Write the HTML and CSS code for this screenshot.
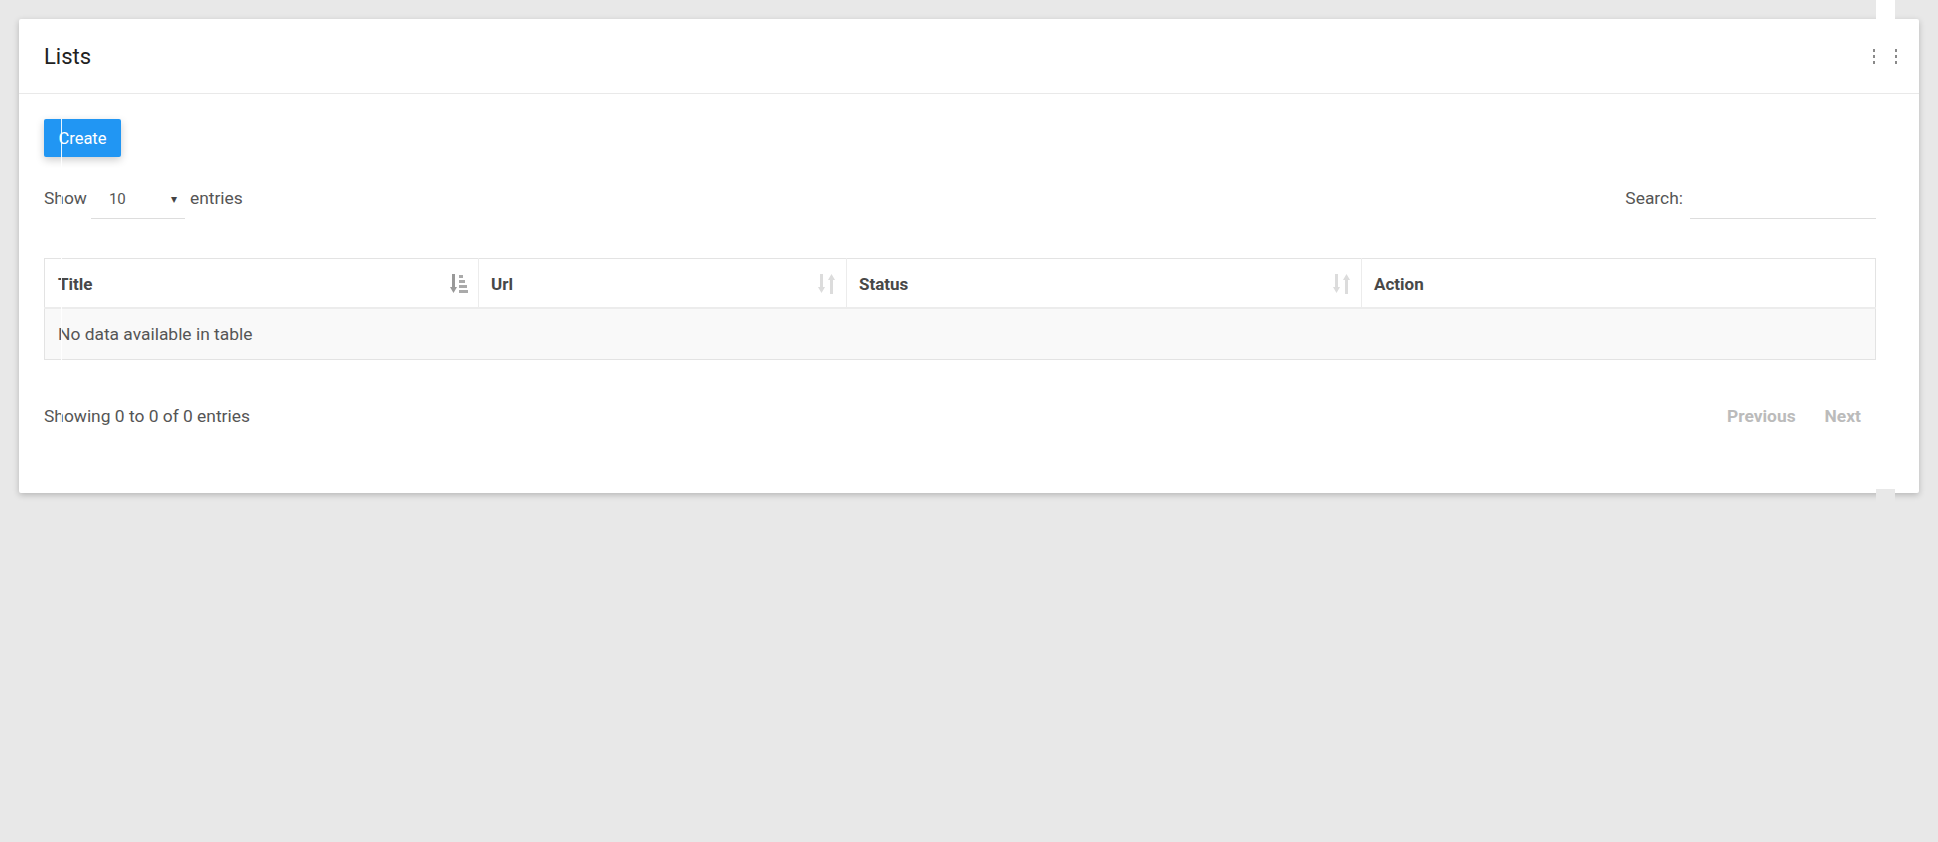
FILE: index.html
```html
<!DOCTYPE html>
<html lang="en">
<head>
  <meta charset="UTF-8">
  <meta name="viewport" content="width=device-width, initial-scale=1.0">
  <title>Lists</title>
  <link rel="stylesheet" href="styles.css">
</head>
<body>
  <div class="page">
    <div class="card">
      <div class="card-header">
        <h2>Lists</h2>
        <div class="header-tools">
          <svg class="dots" width="3" height="16" viewBox="0 0 3 16"><rect x="0" y="0" width="2" height="3"/><rect x="0" y="6" width="2" height="3"/><rect x="0" y="12" width="2" height="3"/></svg>
          <svg class="dots" width="3" height="16" viewBox="0 0 3 16"><rect x="0" y="0" width="2" height="3"/><rect x="0" y="6" width="2" height="3"/><rect x="0" y="12" width="2" height="3"/></svg>
        </div>
      </div>

      <div class="card-body">
        <button class="btn-create">Create</button>

        <div class="table-controls">
          <label class="length">
            Show
            <span class="select"><span>10</span><span class="caret">&#9662;</span></span>
            entries
          </label>
          <label class="search">
            Search:
            <input type="text">
          </label>
        </div>

        <table class="data-table">
          <thead>
            <tr>
              <th class="col-title">
                <div class="th-inner">Title
                  <svg width="18" height="20" viewBox="0 0 18 20"><rect x="2" y="0" width="3" height="14" fill="#999"/><polygon points="0,13 7,13 3.5,19" fill="#999"/><rect x="9" y="1" width="4" height="3" fill="#aaa"/><rect x="9" y="6" width="6" height="3" fill="#aaa"/><rect x="9" y="11" width="8" height="3" fill="#aaa"/><rect x="9" y="16" width="9" height="3" fill="#aaa"/></svg>
                </div>
              </th>
              <th class="col-url">
                <div class="th-inner">Url
                  <svg class="sort-both" width="18" height="20" viewBox="0 0 18 20"><rect x="2" y="0" width="3" height="14"/><polygon points="0,13 7,13 3.5,19"/><rect x="12" y="5" width="3" height="15"/><polygon points="10,6 17,6 13.5,0"/></svg>
                </div>
              </th>
              <th class="col-status">
                <div class="th-inner">Status
                  <svg class="sort-both" width="18" height="20" viewBox="0 0 18 20"><rect x="2" y="0" width="3" height="14"/><polygon points="0,13 7,13 3.5,19"/><rect x="12" y="5" width="3" height="15"/><polygon points="10,6 17,6 13.5,0"/></svg>
                </div>
              </th>
              <th class="col-action">Action</th>
            </tr>
          </thead>
          <tbody>
            <tr class="empty">
              <td colspan="4">No data available in table</td>
            </tr>
          </tbody>
        </table>

        <div class="table-footer">
          <div class="info">Showing 0 to 0 of 0 entries</div>
          <div class="paginate">
            <a class="page-btn disabled">Previous</a>
            <a class="page-btn disabled">Next</a>
          </div>
        </div>
      </div>
    </div>
  </div>

  <!-- screen artifacts in the capture -->
  <div class="strip-top"></div>
  <div class="strip-bottom"></div>
  <div class="seam"></div>
</body>
</html>
```

FILE: styles.css
```css
body {
  margin: 0;
  background: #e8e8e8;
  font-family: Roboto, 'Noto Sans', sans-serif;
  color: #555;
  min-height: 842px;
}

.page {
  padding: 19px;
}

.card {
  background: #fff;
  border-radius: 2px;
  box-shadow: 0 2px 6px rgba(0, 0, 0, 0.22);
}

.card-header {
  height: 74px;
  border-bottom: 1px solid #e9e9e9;
  display: flex;
  align-items: center;
  justify-content: space-between;
  padding: 0 21px 0 25px;
}

.card-header h2 {
  margin: 0;
  font-size: 22px;
  font-weight: 400;
  color: #212121;
}

.header-tools {
  display: flex;
  gap: 19px;
  margin-top: 1px;
}

.dots {
  fill: #8a8a8a;
}

.card-body {
  padding: 25px 43px 58px 25px;
}

.btn-create {
  display: block;
  width: 77px;
  height: 38px;
  border: none;
  border-radius: 2px;
  background: #2196f3;
  color: #fff;
  font-family: Roboto, sans-serif;
  font-size: 16.5px;
  padding: 0;
  box-shadow: 0 3px 8px rgba(0, 0, 0, 0.2);
}

.table-controls {
  display: flex;
  justify-content: space-between;
  align-items: center;
  margin-top: 20px;
  height: 42px;
  font-size: 17.4px;
}

.length,
.search {
  display: flex;
  align-items: center;
  height: 42px;
}

.select {
  display: flex;
  align-items: center;
  justify-content: space-between;
  width: 68px;
  height: 39px;
  margin: 0 5px 0 4px;
  padding: 2px 8px 0 18px;
  border-bottom: 1px solid #ddd;
  font-size: 15px;
  color: #555;
  box-sizing: content-box;
}

.caret {
  font-size: 12px;
  color: #444;
}

.search input {
  width: 186px;
  height: 41px;
  margin-left: 7px;
  border: none;
  border-bottom: 1px solid #ddd;
  padding: 0;
  outline: none;
  font-size: 16px;
  box-sizing: content-box;
}

.data-table {
  width: 100%;
  margin-top: 39px;
  border-collapse: collapse;
  border: 1px solid #e3e3e3;
  font-size: 17.4px;
}

.data-table th {
  height: 47px;
  padding: 1px 10px 0 12px;
  text-align: left;
  font-weight: 700;
  font-size: 17px;
  color: #484848;
  border-left: 1px solid #ececec;
  border-bottom: 2px solid #ececec;
}

.data-table th:first-child {
  border-left: none;
  padding-left: 13px;
}

.col-title { width: 410px; }
.col-url { width: 345px; }
.col-status { width: 492px; }

.th-inner {
  display: flex;
  justify-content: space-between;
  align-items: center;
}

.sort-both {
  fill: #dcdcdc;
}

.data-table td {
  height: 50px;
  padding: 0 13px;
  background: #f9f9f9;
  color: #555;
}

.table-footer {
  display: flex;
  justify-content: space-between;
  align-items: center;
  margin-top: 37px;
  height: 38px;
  font-size: 17.4px;
}

.paginate {
  display: flex;
  gap: 29px;
  padding-right: 15px;
}

.page-btn {
  font-weight: 700;
  font-size: 17.4px;
  color: #bbb;
  cursor: default;
}

.strip-top {
  position: absolute;
  left: 1876px;
  top: 0;
  width: 19px;
  height: 93px;
  background: #fff;
}

.strip-bottom {
  position: absolute;
  left: 1876px;
  top: 489px;
  width: 19px;
  height: 30px;
  background: #e8e8e8;
}

.seam {
  position: absolute;
  left: 61px;
  top: 119px;
  width: 1px;
  height: 310px;
  background: rgba(255, 255, 255, 0.9);
}
```
